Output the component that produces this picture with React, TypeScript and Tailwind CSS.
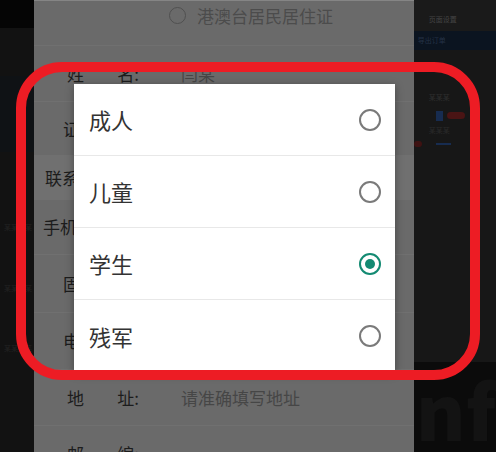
import React from 'react'

const font = { fontFamily: '"Noto Sans CJK SC", "Noto Sans", sans-serif' }

const options = [
  { label: '成人', checked: false },
  { label: '儿童', checked: false },
  { label: '学生', checked: true },
  { label: '残军', checked: false },
]

function Radio({ checked }: { checked: boolean }) {
  if (checked) {
    return (
      <span className="w-[22px] h-[22px] rounded-full border-2 border-[#138a72] flex items-center justify-center">
        <span className="w-[10px] h-[10px] rounded-full bg-[#138a72]" />
      </span>
    )
  }
  return <span className="w-[22px] h-[22px] rounded-full border-2 border-[#7a7a7a]" />
}

function FormRow({ label, value, left, h, border = true }: { label: React.ReactNode; value?: string; left: string; h: string; border?: boolean }) {
  return (
    <div className={`flex items-center ${h} ${border ? 'border-b border-[#707070]' : ''}`}>
      <div className={`${left} flex text-[17px] text-[#1c1c1c]`}>{label}</div>
      {value && <span className="absolute left-[147px] text-[17px] text-[#464646]">{value}</span>}
    </div>
  )
}

export default function App() {
  return (
    <div className="relative w-[496px] h-[452px] overflow-hidden flex bg-[#151515]" style={font}>
      {/* left side of desktop */}
      <div className="w-[36px] flex flex-col">
        <div className="h-[28px] bg-[#050505]" />
        <div className="h-[48px] bg-[#121212]" />
        <div className="h-[76px] bg-[#0f1215]" />
        <div className="flex-1 bg-[#121212] flex flex-col pl-[4px] pt-[70px] gap-[50px] text-[7px] text-[#222]">
          <span>某某某某</span>
          <span>某某某某</span>
          <span>某某某某</span>
        </div>
      </div>

      {/* phone screen (dimmed) */}
      <div className="relative w-[402px] bg-[#6a6a6a] border-t border-[#858585]">
        <div className="h-[45px] flex items-start pt-[4px] pl-[135px] border-b border-[#707070]">
          <span className="w-[17px] h-[17px] mt-[2px] rounded-full border-[1.5px] border-[#505050]" />
          <span className="ml-[11px] text-[17px] leading-[22px] text-[#4c4c4c]">港澳台居民居住证</span>
        </div>
        <div className="relative">
          <FormRow
            h="h-[56px]"
            left="ml-[33px] w-[72px] justify-between"
            label={<><span>姓</span><span>名:</span></>}
            value="闫某"
          />
          <FormRow h="h-[54px]" left="ml-[29px]" label="证件号码:" />
          <div className="h-[44px] flex items-center bg-[#707070] pl-[11px] text-[17px] text-[#1c1c1c]">联系方式</div>
          <FormRow h="h-[55px]" left="ml-[9px]" label="手机号码:" />
          <FormRow h="h-[58px]" left="ml-[29px]" label="固定电话:" />
          <FormRow h="h-[57px]" left="ml-[29px]" label="电子邮箱:" />
          <FormRow
            h="h-[56px]"
            left="ml-[33px] w-[72px] justify-between"
            label={<><span>地</span><span>址:</span></>}
            value="请准确填写地址"
          />
          <FormRow
            h="h-[56px]"
            border={false}
            left="ml-[33px] w-[72px] justify-between"
            label={<><span>邮</span><span>编:</span></>}
          />
        </div>

        {/* picker dialog */}
        <div className="absolute left-[40px] top-[83px] w-[321px] bg-white shadow-[0_2px_8px_rgba(0,0,0,0.35)]">
          {options.map((o, i) => (
            <div
              key={o.label}
              className={`h-[72px] flex items-center justify-between pl-[15px] pr-[14px] ${i < options.length - 1 ? 'border-b border-[#e8e8e8]' : ''}`}
            >
              <span className="text-[22px] text-[#333]">{o.label}</span>
              <Radio checked={o.checked} />
            </div>
          ))}
        </div>
      </div>

      {/* right side of desktop */}
      <div className="flex-1 flex flex-col bg-[#171717] text-[7px]">
        <div className="h-[31px] bg-[#1a1a1a] flex items-end pl-[15px] pb-[7px] text-[#444]">页面设置</div>
        <div className="h-[19px] bg-[#0b1420] flex items-center pl-[4px] text-[#243246]">导出订单</div>
        <div className="pl-[15px] pt-[42px] text-[#2e2e2e]">某某某</div>
        <div className="flex items-center gap-[4px] pl-[22px] pt-[8px]">
          <span className="w-[7px] h-[10px] bg-[#172c50]" />
          <span className="w-[18px] h-[7px] rounded-full bg-[#4a1414]" />
        </div>
        <div className="pl-[15px] pt-[4px] text-[#2a2a2a]">某某某</div>
        <div className="flex items-center pt-[6px]">
          <span className="w-[8px] h-[6px] rounded-full bg-[#3e1212]" />
          <span className="ml-[14px] w-[15px] h-[2px] bg-[#172c50]" />
        </div>
        <div className="flex-1" />
        <div className="h-[90px] bg-[#0b0b0b] overflow-hidden leading-none pl-[2px] pt-[8px] text-[76px] font-black text-[#131313]">nf</div>
      </div>

      {/* red highlight frame */}
      <div className="absolute left-[16px] top-[62px] w-[464px] h-[318px] border-[10px] border-[#ed1c24] rounded-[46px]" />
    </div>
  )
}
